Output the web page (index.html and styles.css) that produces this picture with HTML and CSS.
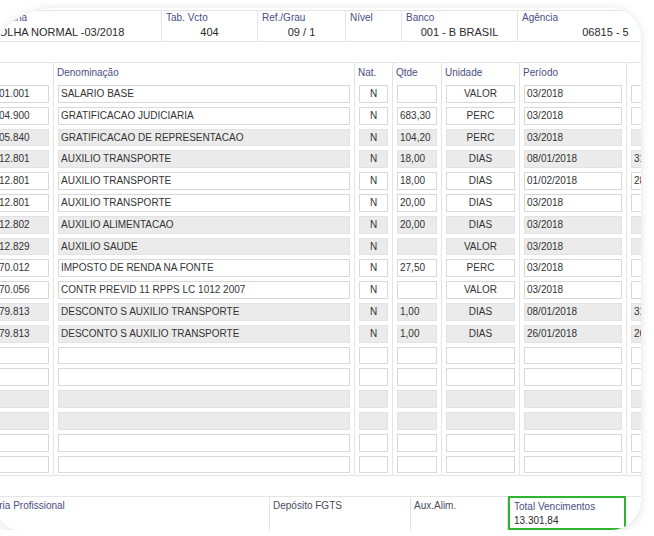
FILE: index.html
```html
<!DOCTYPE html>
<html>
<head>
    <title>Contracheque - Folha Normal</title>
    <meta name="viewport" content="width=device-width, initial-scale=1.0">
    <link rel="stylesheet" href="styles.css">
</head>
<body>
<div class="frame">
    <div class="sheet">
        <!-- top info line -->
        <div class="info">
            <div class="info-cell c-folha"><div class="lbl">Folha</div><div class="val left">FOLHA NORMAL -03/2018</div></div>
            <div class="info-cell c-tab"><div class="lbl">Tab. Vcto</div><div class="val">404</div></div>
            <div class="info-cell c-ref"><div class="lbl">Ref./Grau</div><div class="val">09 / 1</div></div>
            <div class="info-cell c-nivel"><div class="lbl">Nível</div><div class="val"></div></div>
            <div class="info-cell c-banco"><div class="lbl">Banco</div><div class="val">001 - B BRASIL</div></div>
            <div class="info-cell c-agencia"><div class="lbl">Agência</div><div class="val">06815 - 5</div></div>
        </div>

        <!-- lancamentos -->
        <div class="grid">
            <div class="th code">Código</div>
            <div class="th">Denominação</div>
            <div class="th">Nat.</div>
            <div class="th">Qtde</div>
            <div class="th">Unidade</div>
            <div class="th">Período</div>
            <div class="th"></div>

            <div class="td"><div class="box">01.001</div></div>
            <div class="td"><div class="box">SALARIO BASE</div></div>
            <div class="td"><div class="box mid">N</div></div>
            <div class="td"><div class="box"></div></div>
            <div class="td"><div class="box mid">VALOR</div></div>
            <div class="td"><div class="box">03/2018</div></div>
            <div class="td"><div class="box"></div></div>

            <div class="td"><div class="box">04.900</div></div>
            <div class="td"><div class="box">GRATIFICACAO JUDICIARIA</div></div>
            <div class="td"><div class="box mid">N</div></div>
            <div class="td"><div class="box">683,30</div></div>
            <div class="td"><div class="box mid">PERC</div></div>
            <div class="td"><div class="box">03/2018</div></div>
            <div class="td"><div class="box"></div></div>

            <div class="td g"><div class="box">05.840</div></div>
            <div class="td g"><div class="box">GRATIFICACAO DE REPRESENTACAO</div></div>
            <div class="td g"><div class="box mid">N</div></div>
            <div class="td g"><div class="box">104,20</div></div>
            <div class="td g"><div class="box mid">PERC</div></div>
            <div class="td g"><div class="box">03/2018</div></div>
            <div class="td g"><div class="box"></div></div>

            <div class="td g"><div class="box">12.801</div></div>
            <div class="td g"><div class="box">AUXILIO TRANSPORTE</div></div>
            <div class="td g"><div class="box mid">N</div></div>
            <div class="td g"><div class="box">18,00</div></div>
            <div class="td g"><div class="box mid">DIAS</div></div>
            <div class="td g"><div class="box">08/01/2018</div></div>
            <div class="td g"><div class="box">31/01/2018</div></div>

            <div class="td"><div class="box">12.801</div></div>
            <div class="td"><div class="box">AUXILIO TRANSPORTE</div></div>
            <div class="td"><div class="box mid">N</div></div>
            <div class="td"><div class="box">18,00</div></div>
            <div class="td"><div class="box mid">DIAS</div></div>
            <div class="td"><div class="box">01/02/2018</div></div>
            <div class="td"><div class="box">28/02/2018</div></div>

            <div class="td"><div class="box">12.801</div></div>
            <div class="td"><div class="box">AUXILIO TRANSPORTE</div></div>
            <div class="td"><div class="box mid">N</div></div>
            <div class="td"><div class="box">20,00</div></div>
            <div class="td"><div class="box mid">DIAS</div></div>
            <div class="td"><div class="box">03/2018</div></div>
            <div class="td"><div class="box"></div></div>

            <div class="td g"><div class="box">12.802</div></div>
            <div class="td g"><div class="box">AUXILIO ALIMENTACAO</div></div>
            <div class="td g"><div class="box mid">N</div></div>
            <div class="td g"><div class="box">20,00</div></div>
            <div class="td g"><div class="box mid">DIAS</div></div>
            <div class="td g"><div class="box">03/2018</div></div>
            <div class="td g"><div class="box"></div></div>

            <div class="td g"><div class="box">12.829</div></div>
            <div class="td g"><div class="box">AUXILIO SAUDE</div></div>
            <div class="td g"><div class="box mid">N</div></div>
            <div class="td g"><div class="box"></div></div>
            <div class="td g"><div class="box mid">VALOR</div></div>
            <div class="td g"><div class="box">03/2018</div></div>
            <div class="td g"><div class="box"></div></div>

            <div class="td"><div class="box">70.012</div></div>
            <div class="td"><div class="box">IMPOSTO DE RENDA NA FONTE</div></div>
            <div class="td"><div class="box mid">N</div></div>
            <div class="td"><div class="box">27,50</div></div>
            <div class="td"><div class="box mid">PERC</div></div>
            <div class="td"><div class="box">03/2018</div></div>
            <div class="td"><div class="box"></div></div>

            <div class="td"><div class="box">70.056</div></div>
            <div class="td"><div class="box">CONTR PREVID 11 RPPS LC 1012 2007</div></div>
            <div class="td"><div class="box mid">N</div></div>
            <div class="td"><div class="box"></div></div>
            <div class="td"><div class="box mid">VALOR</div></div>
            <div class="td"><div class="box">03/2018</div></div>
            <div class="td"><div class="box"></div></div>

            <div class="td g"><div class="box">79.813</div></div>
            <div class="td g"><div class="box">DESCONTO S AUXILIO TRANSPORTE</div></div>
            <div class="td g"><div class="box mid">N</div></div>
            <div class="td g"><div class="box">1,00</div></div>
            <div class="td g"><div class="box mid">DIAS</div></div>
            <div class="td g"><div class="box">08/01/2018</div></div>
            <div class="td g"><div class="box">31/01/2018</div></div>

            <div class="td g"><div class="box">79.813</div></div>
            <div class="td g"><div class="box">DESCONTO S AUXILIO TRANSPORTE</div></div>
            <div class="td g"><div class="box mid">N</div></div>
            <div class="td g"><div class="box">1,00</div></div>
            <div class="td g"><div class="box mid">DIAS</div></div>
            <div class="td g"><div class="box">26/01/2018</div></div>
            <div class="td g"><div class="box">26/02/2018</div></div>

            <!-- empty lines -->
            <div class="td"><div class="box"></div></div>
            <div class="td"><div class="box"></div></div>
            <div class="td"><div class="box"></div></div>
            <div class="td"><div class="box"></div></div>
            <div class="td"><div class="box"></div></div>
            <div class="td"><div class="box"></div></div>
            <div class="td"><div class="box"></div></div>

            <div class="td"><div class="box"></div></div>
            <div class="td"><div class="box"></div></div>
            <div class="td"><div class="box"></div></div>
            <div class="td"><div class="box"></div></div>
            <div class="td"><div class="box"></div></div>
            <div class="td"><div class="box"></div></div>
            <div class="td"><div class="box"></div></div>

            <div class="td g"><div class="box"></div></div>
            <div class="td g"><div class="box"></div></div>
            <div class="td g"><div class="box"></div></div>
            <div class="td g"><div class="box"></div></div>
            <div class="td g"><div class="box"></div></div>
            <div class="td g"><div class="box"></div></div>
            <div class="td g"><div class="box"></div></div>

            <div class="td g"><div class="box"></div></div>
            <div class="td g"><div class="box"></div></div>
            <div class="td g"><div class="box"></div></div>
            <div class="td g"><div class="box"></div></div>
            <div class="td g"><div class="box"></div></div>
            <div class="td g"><div class="box"></div></div>
            <div class="td g"><div class="box"></div></div>

            <div class="td"><div class="box"></div></div>
            <div class="td"><div class="box"></div></div>
            <div class="td"><div class="box"></div></div>
            <div class="td"><div class="box"></div></div>
            <div class="td"><div class="box"></div></div>
            <div class="td"><div class="box"></div></div>
            <div class="td"><div class="box"></div></div>

            <div class="td"><div class="box"></div></div>
            <div class="td"><div class="box"></div></div>
            <div class="td"><div class="box"></div></div>
            <div class="td"><div class="box"></div></div>
            <div class="td"><div class="box"></div></div>
            <div class="td"><div class="box"></div></div>
            <div class="td"><div class="box"></div></div>
        </div>
    </div>

    <!-- totals -->
    <div class="totals">
        <div class="tot-cell t-cat"><div class="lbl">Categoria Profissional</div></div>
        <div class="tot-cell t-fgts"><div class="lbl dark">Depósito FGTS</div></div>
        <div class="tot-cell t-alim"><div class="lbl dark">Aux.Alim.</div></div>
        <div class="tot-cell t-total"><div class="lbl">Total Vencimentos</div><div class="num">13.301,84</div></div>
        <div class="tot-cell t-rest"></div>
    </div>
</div>
</body>
</html>
```

FILE: styles.css
```css
body {
    margin: 0;
    background-color: #ffffff;
    font-family: "Liberation Sans", Arial, sans-serif;
    font-size: 10px;
    color: #333333;
    overflow: hidden;
}

/* rounded card holding the cropped print */
.frame {
    display: flex;
    flex-direction: column;
    width: 645px;
    height: 522px;
    margin: 8px 0 0 -4px;
    border-radius: 60px 30px 30px 24px / 45px 30px 30px 24px;
    overflow: hidden;
    background-color: #ffffff;
    box-shadow: 0 1px 10px rgba(0, 0, 0, 0.13);
}

.sheet {
    margin-left: -8px;
    width: 740px;
    padding-top: 2px;
}

/* top info line */
.info {
    display: flex;
    height: 32px;
    border-top: 1px solid #e4e4e4;
    border-bottom: 1px solid #e4e4e4;
    box-sizing: border-box;
}

.info-cell {
    padding: 1px 4px;
    border-right: 1px solid #e4e4e4;
    box-sizing: border-box;
    white-space: nowrap;
    overflow: hidden;
}

.c-folha { width: 174px; }
.c-folha .lbl { padding-left: 10px; }
.c-tab { width: 96px; }
.c-ref { width: 88px; }
.c-nivel { width: 56px; }
.c-banco { width: 116px; }
.c-agencia { width: 176px; }

.lbl {
    line-height: 12px;
    color: #4a4d86;
}

.lbl.dark {
    color: #4a4a5e;
}

.val {
    font-size: 11px;
    line-height: 14px;
    margin-top: 1px;
    color: #2a2a2a;
    text-align: center;
}

.val.left {
    text-align: left;
}

/* grid of lines */
.grid {
    display: grid;
    grid-template-columns: 66px 301px 38px 49px 78px 107px 101px;
    grid-template-rows: 20px;
    grid-auto-rows: 21.8px;
    margin-top: 20px;
    border-top: 1px solid #e4e4e4;
    border-bottom: 1px solid #e4e4e4;
}

.th {
    padding: 0 3px;
    line-height: 19px;
    color: #4a4d86;
    border-right: 1px solid #e4e4e4;
    white-space: nowrap;
    overflow: hidden;
}

.th.code {
    text-indent: -24px;
}

.td {
    padding: 2px 4px;
    border-right: 1px solid #e4e4e4;
    box-sizing: border-box;
    min-width: 0;
}

.box {
    height: 100%;
    box-sizing: border-box;
    border: 1px solid #d8d8d8;
    background-color: #ffffff;
    padding: 0 2px;
    line-height: 16px;
    white-space: nowrap;
    overflow: hidden;
}

/* code column is cut by the left edge */
.td:nth-child(7n+1) .box {
    padding-left: 6px;
}

.td.g .box {
    background-color: #ebebeb;
    border-color: #e2e2e2;
}

.box.mid {
    text-align: center;
}

/* totals line */
.totals {
    display: flex;
    height: 33px;
    margin-top: auto;
    margin-left: -8px;
    border-top: 1px solid #e4e4e4;
}

.tot-cell {
    padding: 3px 3px;
    border-right: 1px solid #e4e4e4;
    box-sizing: border-box;
    white-space: nowrap;
    overflow: hidden;
}

.t-cat { width: 282px; text-indent: -24px; }
.t-fgts { width: 141px; }
.t-alim { width: 97px; }
.t-total {
    width: 118px;
    margin-top: -1px;
    border: 2px solid #2db52f;
    padding: 3px 4px;
}
.t-rest { flex: 1; border-right: none; }

.num {
    margin-top: 2px;
    line-height: 12px;
    color: #2a2a2a;
}
```
